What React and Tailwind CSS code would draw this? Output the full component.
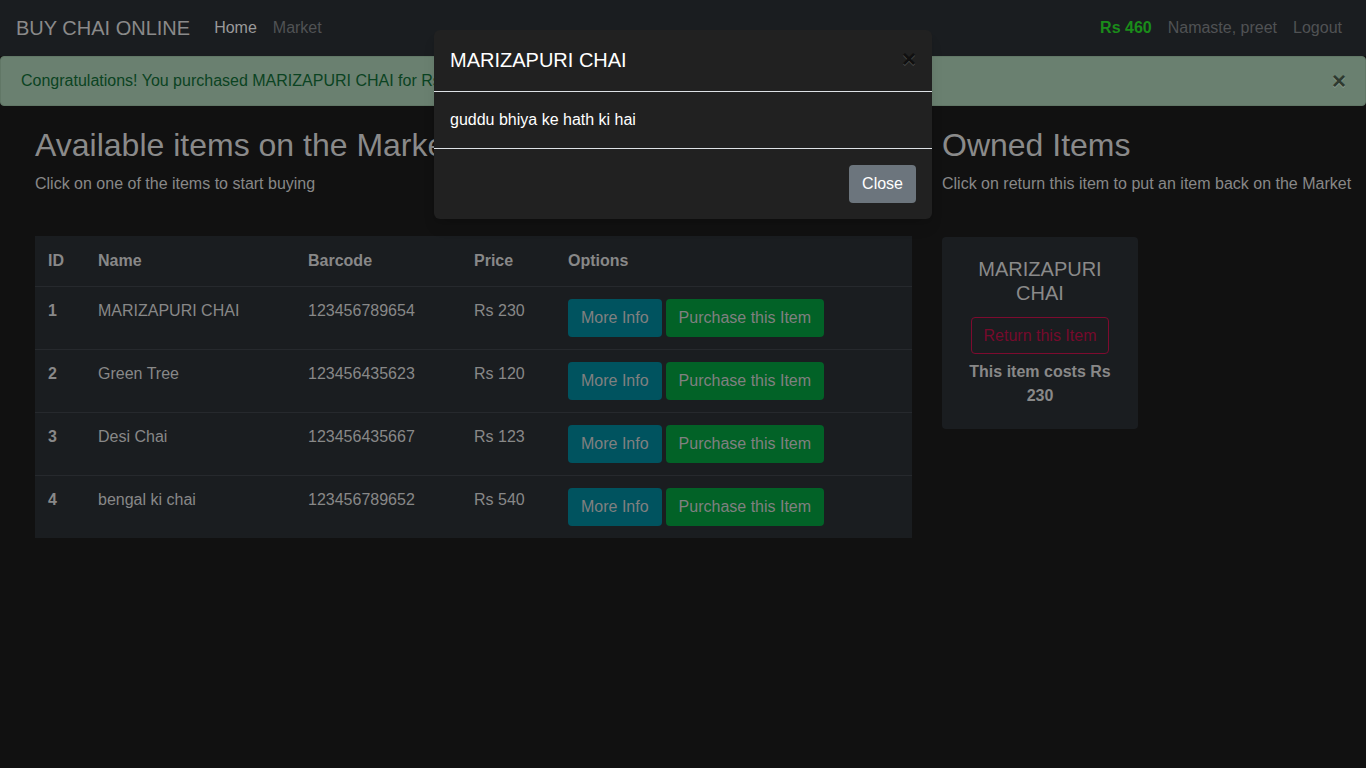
import React from 'react';

const ITEMS = [
  { id: 1, name: 'MARIZAPURI CHAI', barcode: '123456789654', price: 230 },
  { id: 2, name: 'Green Tree', barcode: '123456435623', price: 120 },
  { id: 3, name: 'Desi Chai', barcode: '123456435667', price: 123 },
  { id: 4, name: 'bengal ki chai', barcode: '123456789652', price: 540 },
];

const CloseX = ({ className }) => (
  <span className={`text-2xl font-bold leading-none [text-shadow:0_1px_0_rgba(255,255,255,0.25)] ${className}`}>×</span>
);

export default function App() {
  return (
    <div className="relative min-h-screen bg-[#111111] text-[#888888] font-['Liberation_Sans',Arial,sans-serif] text-base">
      {/* ── Navbar ─────────────────────────────────────── */}
      <nav className="h-[56px] bg-[#1a1d20] flex items-center px-4">
        <span className="text-xl text-[#8a8a8a] mr-4">BUY CHAI ONLINE</span>
        <div className="flex">
          <span className="px-2 text-[#9a9a9a]">Home</span>
          <span className="px-2 text-[#505254]">Market</span>
        </div>
        <div className="ml-auto flex items-center">
          <span className="px-2 font-bold text-[#1a8c1a]">Rs 460</span>
          <span className="px-2 text-[#505254]">Namaste, preet</span>
          <span className="pl-2 pr-2 text-[#505254]">Logout</span>
        </div>
      </nav>

      {/* ── Alert ──────────────────────────────────────── */}
      <div className="h-[50px] bg-[#6a8070] border border-[#617766] rounded flex items-center pl-5 pr-5">
        <span className="text-[#0b4322]">Congratulations! You purchased MARIZAPURI CHAI for Rs 230</span>
        <CloseX className="ml-auto text-[#2e3a30] -mr-[1px]" />
      </div>

      {/* ── Content ────────────────────────────────────── */}
      <div className="grid grid-cols-[877px_1fr] gap-[30px] px-[35px] pt-[20px]">
        <div>
          <h2 className="text-[32px] leading-[1.2] text-[#8a8a8a]">Available items on the Market</h2>
          <p className="mt-[8px] leading-6">Click on one of the items to start buying</p>

          <table className="mt-[40px] w-full bg-[#1a1d20] border-collapse">
            <thead>
              <tr className="h-[50px] text-left">
                <th className="w-[51px] pl-[13px] pr-3 font-bold">ID</th>
                <th className="w-[210px] px-3 font-bold">Name</th>
                <th className="w-[166px] px-3 font-bold">Barcode</th>
                <th className="w-[94px] px-3 font-bold">Price</th>
                <th className="px-3 font-bold">Options</th>
              </tr>
            </thead>
            <tbody>
              {ITEMS.map(item => (
                <tr key={item.id} className="border-t border-[#26292d] align-top">
                  <td className="pl-[13px] pr-3 py-3 font-bold">{item.id}</td>
                  <td className="px-3 py-3">{item.name}</td>
                  <td className="px-3 py-3">{item.barcode}</td>
                  <td className="px-3 py-3">Rs {item.price}</td>
                  <td className="px-3 py-3">
                    <div className="flex gap-1">
                      <button className="h-[38px] px-3 rounded border border-transparent bg-[#00535f] text-[#808080]">More Info</button>
                      <button className="h-[38px] px-3 rounded border border-transparent bg-[#026227] text-[#808080]">Purchase this Item</button>
                    </div>
                  </td>
                </tr>
              ))}
            </tbody>
          </table>
        </div>

        <div>
          <h2 className="text-[32px] leading-[1.2] text-[#8a8a8a] whitespace-nowrap">Owned Items</h2>
          <p className="mt-[8px] leading-6 whitespace-nowrap">Click on return this item to put an item back on the Market</p>

          <div className="mt-[41px] w-[196px] bg-[#1a1d20] rounded px-5 pt-5 pb-[21px] flex flex-col items-center text-center">
            <h5 className="text-xl leading-6 text-[#8a8a8a]">MARIZAPURI CHAI</h5>
            <button className="mt-[12px] h-[37px] w-[138px] rounded border border-[#7d0b2f] text-[#760a2c]">Return this Item</button>
            <p className="mt-[6px] font-bold leading-6">This item costs Rs 230</p>
          </div>
        </div>
      </div>

      {/* ── Modal ──────────────────────────────────────── */}
      <div className="absolute left-[434px] top-[30px] w-[498px] bg-[#212121] rounded-md text-white shadow-lg">
        <div className="h-[62px] flex items-start px-4 pt-[15px] border-b border-[#dee2e6]">
          <h5 className="text-xl leading-[30px]">MARIZAPURI CHAI</h5>
          <CloseX className="ml-auto mt-[2px] mr-0 text-[#0c0c0c] opacity-80" />
        </div>
        <div className="px-4 py-4 leading-6 border-b border-[#dee2e6]">guddu bhiya ke hath ki hai</div>
        <div className="flex justify-end p-4">
          <button className="h-[38px] px-3 rounded border border-transparent bg-[#6c757d] text-white">Close</button>
        </div>
      </div>
    </div>
  );
}
